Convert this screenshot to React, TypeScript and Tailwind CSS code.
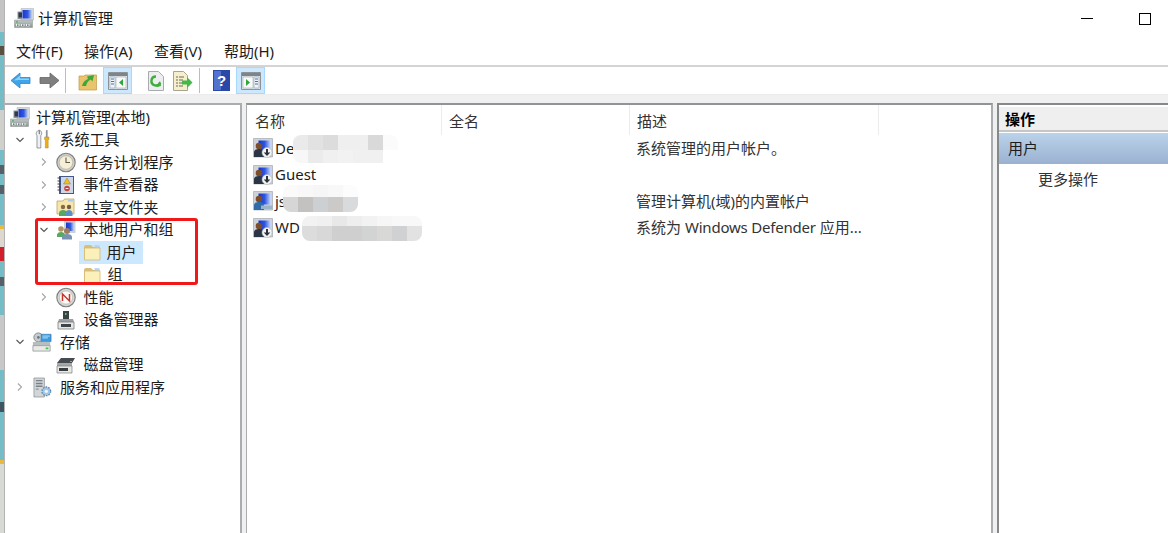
import React from "react";

const FONT = '"Noto Sans", "Noto Sans CJK SC", sans-serif';

function ComputerMgmt() {
  return (
    <svg viewBox="0 0 20 20" className="w-5 h-5 shrink-0">
      <defs>
        <linearGradient id="scr" x1="0" x2="1" y1="0" y2="0">
          <stop offset="0" stopColor="#1c38cc" />
          <stop offset="0.55" stopColor="#2f58e0" />
          <stop offset="1" stopColor="#c4d4f6" />
        </linearGradient>
        <linearGradient id="base" x1="0" x2="0" y1="0" y2="1">
          <stop offset="0" stopColor="#c2c8c8" />
          <stop offset="1" stopColor="#8a9492" />
        </linearGradient>
      </defs>
      <path d="M7 0.500h12.500v11.500H7z" fill="#d4d8de" stroke="#a8aeb6" strokeWidth="0.500" />
      <path d="M8.500 2h9.500v8.500H8.500z" fill="url(#scr)" />
      <path d="M3.500 3.500H8V11H3.500z" fill="#8e9498" />
      <path d="M4.500 4.500H8v5H4.500z" fill="#2c3a4a" />
      <path d="M0.500 12h18v7.500H0.500z" fill="url(#base)" stroke="#8a9090" strokeWidth="0.500" />
      <path d="M2 13.200h2v1.300H2z" fill="#38c24a" />
      <path d="M2 16h3.500v2.200H2zM7 16h3.500v2.200H7zM12 16h3.500v2.200H12z" fill="#eef1ee" />
      <path d="M3 16.500h1.500v1.200H3zM8 16.500h1.500v1.200H8zM13 16.500h1.500v1.200H13z" fill="#4e5a58" />
    </svg>
  );
}

function UserItem({ plain }: { plain?: boolean }) {
  return (
    <svg viewBox="0 0 20 20" className="w-5 h-5 shrink-0">
      <defs>
        <linearGradient id="uscr" x1="0" x2="1" y1="0" y2="0">
          <stop offset="0" stopColor="#1433cc" />
          <stop offset="0.5" stopColor="#2d57e2" />
          <stop offset="1" stopColor="#d2def8" />
        </linearGradient>
      </defs>
      <path d="M0.500 0.500h19v18.500h-19z" fill="#cfd3d8" stroke="#9aa0a6" strokeWidth="0.600" />
      <path d="M5.500 2.500H18v11H5.500z" fill="url(#uscr)" />
      <circle cx="6" cy="8" r="3.300" fill="#7c4e2c" />
      <path d="M1 19v-4.500c0-2.500 2-3.500 5-3.500s5 1 5 3.500V19z" fill={plain ? "#2f6ca8" : "#2a3646"} />
      {plain ? (
        <path d="M8 14.500h11.500V18H8z" fill="#9cb4c8" />
      ) : (
        <g>
          <circle cx="14" cy="14.500" r="5" fill="#f2f3f4" stroke="#a8aeb2" strokeWidth="0.500" />
          <path d="M13 11h2v3.500h2.300L14 18l-3.300-3.500H13z" fill="#2c3238" />
        </g>
      )}
    </svg>
  );
}

function Folder() {
  return (
    <svg viewBox="0 0 20 20" className="w-[20px] h-[20px] shrink-0">
      <path d="M2 5c0-1 .6-2 2-2h5l2 2h7V18H2z" fill="#d8bf7e" />
      <path d="M2.500 6h15.500v12H2.500z" fill="#fbefba" stroke="#d4b86e" strokeWidth="0.800" />
      <path d="M12.500 3.200h5v2.300h-5z" fill="#b4d2ec" />
    </svg>
  );
}

function Tools() {
  return (
    <svg viewBox="0 0 20 24" className="w-[17px] h-[21px]">
      <path d="M6 1c-3 1-4.500 4-2.500 6.500V22H8V7.500C10 5 9 2 6.500 1v4.500H6z" fill="#eef0f2" stroke="#6c7276" strokeWidth="0.800" />
      <path d="M14 1h2v8h-2z" fill="#8c9195" />
      <path d="M12.500 9h5v3l-.8 1v9h-3.400v-9l-.8-1z" fill="#eeb016" stroke="#a5760c" strokeWidth="0.500" />
    </svg>
  );
}

function Clock() {
  return (
    <svg viewBox="0 0 20 20" className="w-[21px] h-[21px]">
      <circle cx="10" cy="10" r="9.200" fill="#cfcfc8" stroke="#7c8084" strokeWidth="1.100" />
      <circle cx="10" cy="10" r="6.800" fill="#f6efd8" stroke="#a9a595" strokeWidth="0.600" />
      <path d="M10 5v5h4" fill="none" stroke="#5e5a50" strokeWidth="1.100" />
    </svg>
  );
}

function EventViewer() {
  return (
    <svg viewBox="0 0 20 20" className="w-5 h-5">
      <path d="M3 1h15v18H3z" fill="#44598a" />
      <path d="M5 2h12v16H5z" fill="#cdd7e8" />
      <path d="M1.500 3h3M1.500 6h3M1.500 9h3M1.500 12h3M1.500 15h3" stroke="#3a3f48" strokeWidth="1" />
      <path d="M11 3l3.500 6h-7z" fill="#f0c020" stroke="#9c7a10" strokeWidth="0.500" />
      <circle cx="11" cy="13.500" r="2.800" fill="#c8423a" />
      <path d="M9.600 13.500h2.800" stroke="#fff" strokeWidth="0.900" />
    </svg>
  );
}

function Shared() {
  return (
    <svg viewBox="0 0 20 20" className="w-5 h-5">
      <path d="M1 4h6l1.500-2H18v15H1z" fill="#f6e6ac" stroke="#c0a55e" strokeWidth="0.800" />
      <path d="M12 2.500h5v2h-5z" fill="#a8cce8" />
      <circle cx="7" cy="10" r="2.200" fill="#8a6a44" />
      <circle cx="13" cy="10" r="2.200" fill="#7a5c3c" />
      <path d="M3 19v-3c0-2 2-3 4-3s4 1 4 3v3z" fill="#55a864" />
      <path d="M9.500 19v-3c0-2 2-3 3.500-3s3.500 1 3.500 3v3z" fill="#5b8fc8" />
    </svg>
  );
}

function LocalUsers() {
  return (
    <svg viewBox="0 0 20 20" className="w-5 h-5">
      <path d="M8 1h11.500v12H8z" fill="#ccd2da" />
      <path d="M10 2.500h8v8.500h-8z" fill="url(#scr)" />
      <circle cx="5" cy="9" r="2.800" fill="#b09468" />
      <path d="M1 17v-2c0-2 2-3 4-3s4 1 4 3v2z" fill="#5aa85e" />
      <circle cx="11" cy="11" r="3" fill="#a07c58" />
      <path d="M6 19.500V17c0-2 2-3 5-3s5 1 5 3v2.500z" fill="#7793b0" />
    </svg>
  );
}

function Perf() {
  return (
    <svg viewBox="0 0 20 20" className="w-[21px] h-[21px]">
      <circle cx="10" cy="10" r="9.200" fill="#d8d6d0" stroke="#7a7e80" strokeWidth="1.100" />
      <circle cx="10" cy="10" r="6.600" fill="#fbfaf6" stroke="#a5a5a0" strokeWidth="0.500" />
      <path d="M6.500 13.500V6.500L13.500 13.500V6.500" fill="none" stroke="#c8342c" strokeWidth="1.500" />
    </svg>
  );
}

function DeviceMgr() {
  return (
    <svg viewBox="0 0 20 20" className="w-5 h-5">
      <path d="M7 1h6v9H7z" fill="#3a4244" />
      <path d="M9 3h1.500v2H9z" fill="#4fd05a" />
      <path d="M3 9h14l1 3H2z" fill="#9a9ea2" />
      <path d="M2 12h16v7H2z" fill="#e6e7e3" stroke="#7a7f84" strokeWidth="0.800" />
      <path d="M5 14h10v3H5z" fill="#3e4448" />
    </svg>
  );
}

function Storage() {
  return (
    <svg viewBox="0 0 22 22" className="w-[22px] h-[22px]">
      <circle cx="7" cy="6" r="5" fill="#c6ccce" stroke="#6a7276" strokeWidth="0.800" />
      <circle cx="7" cy="6" r="1.500" fill="#6e777b" />
      <path d="M10 2.500h11v8H10z" fill="#3d9adf" stroke="#2570aa" strokeWidth="0.600" />
      <path d="M11.500 4.500h8M11.500 6.500h6" stroke="#bfe6fa" strokeWidth="1" />
      <path d="M1 11h19v4H1z" fill="#b8bec0" />
      <path d="M1 15h19v6H1z" fill="#e8eae6" stroke="#7a8084" strokeWidth="0.700" />
      <path d="M15 17h3v2h-3z" fill="#4cc255" />
    </svg>
  );
}

function Disk() {
  return (
    <svg viewBox="0 0 20 20" className="w-5 h-5">
      <path d="M5 3h14l-3 5H1z" fill="#454b4f" />
      <path d="M1 8h15v3H1z" fill="#a4a9ac" />
      <path d="M14 6h2v1h-2z" fill="#4fd05a" />
      <path d="M1 11h15v7H1z" fill="#e8e8e2" stroke="#7c8084" strokeWidth="0.700" />
      <path d="M3 13h9v3H3z" fill="#3a3f42" />
    </svg>
  );
}

function Services() {
  return (
    <svg viewBox="0 0 20 22" className="w-[19px] h-[21px]">
      <path d="M1 1h11v20H1z" fill="#d2d6d8" stroke="#80868a" strokeWidth="0.700" />
      <path d="M3 3h7v1.500H3zM3 6h7v1.500H3zM3 9h7v1.500H3z" fill="#7a8286" />
      <path d="M3 12h3v1.500H3z" fill="#8ba0b0" />
      <circle cx="14" cy="15" r="4.600" fill="#a4c6e6" stroke="#5a88b0" strokeWidth="1.400" strokeDasharray="1.700 1.200" />
      <circle cx="14" cy="15" r="1.700" fill="#f2f6fa" />
    </svg>
  );
}

function Chevron({ open }: { open?: boolean }) {
  return open ? (
    <svg viewBox="0 0 10 10" className="w-[10px] h-[10px]">
      <path d="M1.500 3l3.500 3.500L8.500 3" fill="none" stroke="#555" strokeWidth="1.100" />
    </svg>
  ) : (
    <svg viewBox="0 0 10 10" className="w-[10px] h-[10px]">
      <path d="M3 1.500L6.500 5 3 8.500" fill="none" stroke="#a6a6a6" strokeWidth="1.100" />
    </svg>
  );
}

function Row({
  pad,
  chevron,
  icon,
  label,
  gap = "gap-[7.500px]",
}: {
  pad: string;
  chevron?: "open" | "closed";
  icon: React.ReactNode;
  label: string;
  gap?: string;
}) {
  return (
    <div className={`h-[22.500px] flex items-center ${pad}`}>
      <div className="w-[13px] mr-[6px] flex justify-center shrink-0">
        {chevron && <Chevron open={chevron === "open"} />}
      </div>
      <div className={`flex items-center ${gap}`}>
        <div className="w-[20px] flex justify-center shrink-0">{icon}</div>
        <span className="whitespace-nowrap">{label}</span>
      </div>
    </div>
  );
}

function Mosaic({ rows, cell = 15 }: { rows: { h: number; colors: string[] }[]; cell?: number }) {
  return (
    <div className="rounded-lg overflow-hidden">
      {rows.map((r, i) => (
        <div key={i} className="flex">
          {r.colors.map((c, j) => (
            <div key={j} style={{ width: cell, height: r.h, background: c }} />
          ))}
        </div>
      ))}
    </div>
  );
}

function ListRow({
  icon,
  name,
  desc,
  mosaicClass,
  mosaic,
}: {
  icon: React.ReactNode;
  name: string;
  desc?: React.ReactNode;
  mosaicClass?: string;
  mosaic?: { h: number; colors: string[] }[];
}) {
  return (
    <div className="h-[26.500px] flex items-center">
      <div className="w-[194px] flex items-center pl-[6px] gap-[2px] relative">
        {icon}
        <span>{name}</span>
        {mosaic && (
          <div className={`absolute ${mosaicClass}`}>
            <Mosaic rows={mosaic} />
          </div>
        )}
      </div>
      <div className="w-[188px]" />
      <div className="pl-[7px] text-[#333] whitespace-nowrap">{desc}</div>
    </div>
  );
}

function ToolBtn({ children, className = "" }: { children: React.ReactNode; className?: string }) {
  return <div className={`flex items-center justify-center ${className}`}>{children}</div>;
}

export default function App() {
  return (
    <div
      className="w-[1168px] h-[533px] overflow-hidden flex bg-white text-[15px] leading-none text-[#1c1c1c]"
      style={{ fontFamily: FONT }}
    >
      {/* desktop sliver */}
      <div className="w-[3.500px] shrink-0 flex flex-col bg-[#74bcc6]">
        <div className="h-[32px] bg-[#c4c4c4]" />
        <div className="h-[14px] bg-[#74bcc6]" />
        <div className="h-[9px] bg-[#5a5040]" />
        <div className="h-[55px] bg-[#74bcc6]" />
        <div className="h-[40px] bg-[#cfcfcb]" />
        <div className="h-[15px] bg-[#74bcc6]" />
        <div className="h-[9px] bg-[#55606a]" />
        <div className="h-[11px] bg-[#74bcc6]" />
        <div className="h-[9px] bg-[#55606a]" />
        <div className="h-[31px] bg-[#74bcc6]" />
        <div className="h-[4px] bg-[#e8b93c]" />
        <div className="h-[18px] bg-[#dcd8d0]" />
        <div className="h-[14px] bg-[#d21f2c]" />
        <div className="h-[16px] bg-[#74bcc6]" />
        <div className="h-[9px] bg-[#55606a]" />
        <div className="h-[29px] bg-[#74bcc6]" />
        <div className="h-[55px] bg-[#c8c8c8]" />
        <div className="h-[32px] bg-[#74bcc6]" />
        <div className="h-[10px] bg-[#3f5460]" />
        <div className="h-[48px] bg-[#74bcc6]" />
        <div className="h-[4px] bg-[#e8b93c]" />
        <div className="flex-1 bg-[#d8dad6]" />
      </div>
      <div className="w-[1.500px] shrink-0 bg-[#b4b4b4]" />

      {/* window */}
      <div className="flex-1 min-w-0 flex flex-col">
        {/* title bar */}
        <div className="h-[37px] flex items-start shrink-0">
          <div className="pl-[9px] pt-[8px]">
            <ComputerMgmt />
          </div>
          <div className="ml-[4px] pt-[11px] text-[15px]">计算机管理</div>
          <div className="flex-1" />
          <div className="w-[12px] h-[1px] bg-black mt-[18px]" />
          <div className="w-[12px] h-[12px] border border-black ml-[46px] mr-[17px] mt-[13px]" />
        </div>

        {/* menu */}
        <div className="h-[30px] flex pl-[11px] pt-[7px] shrink-0 gap-[21px] text-[15px] border-b-2 border-[#d4d4d4]">
          <span className="w-[47px] whitespace-nowrap">文件(F)</span>
          <span className="w-[49px] whitespace-nowrap">操作(A)</span>
          <span className="w-[49px] whitespace-nowrap">查看(V)</span>
          <span className="w-[51px] whitespace-nowrap">帮助(H)</span>
        </div>

        {/* toolbar */}
        <div className="h-[28px] shrink-0 flex items-center pl-[5px] border-b border-[#ececec]">
          <ToolBtn className="w-[21px] h-[21px]">
            <svg viewBox="0 0 21 21" className="w-[21px] h-[21px]">
              <path d="M1 10.500L10 3v4.500h10v6H10V18z" fill="#3fa4ea" stroke="#2d86c8" strokeWidth="0.800" />
              <path d="M4 10.500l6-5v3h9v1.500H9z" fill="#8fd0f5" />
            </svg>
          </ToolBtn>
          <ToolBtn className="w-[21px] h-[21px] ml-[8px]">
            <svg viewBox="0 0 21 21" className="w-[21px] h-[21px]">
              <path d="M20 10.500L11 3v4.500H1v6h10V18z" fill="#7f7f7f" stroke="#666" strokeWidth="0.800" />
            </svg>
          </ToolBtn>
          <div className="w-px h-[25px] bg-[#bcbcbc] ml-[5px]" />
          <ToolBtn className="w-[20px] h-[20px] ml-[12px]">
            <svg viewBox="0 0 20 20" className="w-[20px] h-[20px]">
              <path d="M1 5h5l1-1h11.500v15H1z" fill="#e9c46c" stroke="#c29a42" strokeWidth="0.700" />
              <path d="M4 15c1-4 3-6 6-7l-1-2.500L16 4l-1.500 6.500-1.800-2c-2 1-4 3-4.700 6.500z" fill="#3fa63a" />
            </svg>
          </ToolBtn>
          <ToolBtn className="w-[29px] h-[27px] ml-[5px] bg-[#cce8ff] border border-[#a8d8ff]">
            <svg viewBox="0 0 20 18" className="w-[20px] h-[18px]">
              <path d="M.5.500h19v17H.5z" fill="#dfe3e6" stroke="#8c9296" />
              <path d="M1 1h18v3H1z" fill="#7e858a" />
              <path d="M2 5h5v11H2z" fill="#f0f4f8" stroke="#8ea4bc" strokeWidth="0.600" />
              <path d="M8 5h10v11H8z" fill="#f8fafa" stroke="#a6aeb4" strokeWidth="0.600" />
              <path d="M15 7v7l-4-3.500z" fill="#2fa83a" />
              <path d="M3 7h3M3 9.500h3M3 12h3" stroke="#4a74a8" />
            </svg>
          </ToolBtn>
          <ToolBtn className="w-[18px] h-[21px] ml-[15px]">
            <svg viewBox="0 0 16 20" className="w-[16px] h-[20px]">
              <path d="M.5.500h10l5 5v14H.5z" fill="#eceef0" stroke="#a8abae" />
              <path d="M8 5.500a4.500 4.500 0 1 0 4.200 6" fill="none" stroke="#3fae3a" strokeWidth="2.400" />
              <path d="M8 16l5-1-1-5z" fill="#3fae3a" />
            </svg>
          </ToolBtn>
          <ToolBtn className="w-[20px] h-[21px] ml-[8px]">
            <svg viewBox="0 0 20 20" className="w-[20px] h-[20px]">
              <path d="M.5.500h10l4 4v15H.5z" fill="#f7eecb" stroke="#a8a48e" />
              <path d="M3 6h2M6 6h5M3 9h2M6 9h4M3 12h2M6 12h4M3 15h2M6 15h4" stroke="#6a6a60" />
              <path d="M9 9.500h5V6l5.500 5.500L14 17v-3.500H9z" fill="#46b84a" />
            </svg>
          </ToolBtn>
          <div className="w-px h-[25px] bg-[#bcbcbc] ml-[6px]" />
          <ToolBtn className="w-[17px] h-[21px] ml-[13px]">
            <svg viewBox="0 0 17 21" className="w-[17px] h-[21px]">
              <path d="M0 0h17v21H0z" fill="#2a48a8" />
              <path d="M1 1h7v19H1z" fill="#5172cf" />
              <text x="8.500" y="16" textAnchor="middle" fontSize="15" fontWeight="700" fill="#ffffff" fontFamily="Liberation Sans">?</text>
            </svg>
          </ToolBtn>
          <ToolBtn className="w-[29px] h-[27px] ml-[6px] bg-[#cce8ff] border border-[#a8d8ff]">
            <svg viewBox="0 0 20 18" className="w-[20px] h-[18px]">
              <path d="M.5.500h19v17H.5z" fill="#dfe3e6" stroke="#8c9296" />
              <path d="M1 1h18v3H1z" fill="#7e858a" />
              <path d="M2 5h10v11H2z" fill="#f8fafa" stroke="#a6aeb4" strokeWidth="0.600" />
              <path d="M13 5h5v11h-5z" fill="#f0f4f8" stroke="#8ea4bc" strokeWidth="0.600" />
              <path d="M5 7v7l4-3.500z" fill="#2fa83a" />
              <path d="M14 7h3M14 9.500h3M14 12h3" stroke="#4a74a8" />
            </svg>
          </ToolBtn>
        </div>

        {/* spacer strip */}
        <div className="h-[8px] shrink-0 bg-[#f0f0f0]" />

        {/* panes */}
        <div className="flex-1 min-h-0 flex bg-[#f0f0f0]">
          {/* tree */}
          <div className="w-[237px] shrink-0 bg-white border-t-2 border-r-2 border-[#a9adb0] pt-[1px]">
            <div className="h-[22.500px] flex items-center pl-[5px] gap-[6px]">
              <ComputerMgmt />
              <span>计算机管理(本地)</span>
            </div>
            <Row pad="pl-[8px]" chevron="open" icon={<Tools />} label="系统工具" />
            <Row pad="pl-[32px]" chevron="closed" icon={<Clock />} label="任务计划程序" />
            <Row pad="pl-[32px]" chevron="closed" icon={<EventViewer />} label="事件查看器" />
            <Row pad="pl-[32px]" chevron="closed" icon={<Shared />} label="共享文件夹" />
            <div className="relative">
              <Row pad="pl-[32px]" chevron="open" icon={<LocalUsers />} label="本地用户和组" />
              <div className="h-[22.500px] flex items-center pl-[73.500px]">
                <div className="h-full flex items-center bg-[#cce8ff] pl-[3px] pr-[6px] gap-[5px]">
                  <Folder />
                  <span>用户</span>
                </div>
              </div>
              <div className="h-[22.500px] flex items-center pl-[76.500px] gap-[6px]">
                <Folder />
                <span>组</span>
              </div>
              <div className="absolute left-[29.500px] top-[-1px] w-[163px] h-[67px] border-[3px] border-[#f01818] rounded-[3px]" />
            </div>
            <Row pad="pl-[32px]" chevron="closed" icon={<Perf />} label="性能" />
            <Row pad="pl-[32px]" icon={<DeviceMgr />} label="设备管理器" />
            <Row pad="pl-[8px]" chevron="open" icon={<Storage />} label="存储" gap="gap-[8px]" />
            <Row pad="pl-[32px]" icon={<Disk />} label="磁盘管理" />
            <Row pad="pl-[8px]" chevron="closed" icon={<Services />} label="服务和应用程序" gap="gap-[8px]" />
          </div>

          <div className="w-[4px] shrink-0" />

          {/* list */}
          <div className="w-[747px] shrink-0 bg-white border-t-2 border-l border-r-2 border-[#a9adb0] border-t-[#8f9497]">
            <div className="h-[30px] flex text-[#333]">
              <div className="w-[195px] pl-[8px] pt-[9px] border-r border-[#ececec]">名称</div>
              <div className="w-[188px] pl-[7px] pt-[9px] border-r border-[#ececec]">全名</div>
              <div className="w-[249px] pl-[7px] pt-[9px] border-r border-[#ececec]">描述</div>
            </div>
            <ListRow
              icon={<UserItem />}
              name="De"
              desc="系统管理的用户帐户。"
              mosaicClass="left-[46px] top-[-3px]"
              mosaic={[
                { h: 15, colors: ["#eaeaea", "#e2e2e2", "#dcdcdc", "#efefef", "#efefef", "#d9d9d9", "#fbfbfb"] },
                { h: 13, colors: ["#f7f7f7", "#ebebeb", "#f0f0f0", "#f2f2f2", "#f0f0f0", "#f0f0f0"] },
              ]}
            />
            <ListRow icon={<UserItem />} name="Guest" />
            <ListRow
              icon={<UserItem plain />}
              name="js"
              desc="管理计算机(域)的内置帐户"
              mosaicClass="left-[36px] top-[-6px]"
              mosaic={[
                { h: 12, colors: ["#fafafa", "#f8f8f8", "#f6f6f6", "#f8f8f8", "#fcfcfc"] },
                { h: 15, colors: ["#d6d6d6", "#c4c2c0", "#cdd0d3", "#cbcac8", "#d8dadc"] },
              ]}
            />
            <ListRow
              icon={<UserItem />}
              name="WD"
              desc={
                <>
                  系统为 <span className="tracking-[-0.2px]">Windows Defender</span> 应用...
                </>
              }
              mosaicClass="left-[55px] top-[-2px]"
              mosaic={[
                { h: 10, colors: ["#f2f2f2", "#f0f0f0", "#e8e8e8", "#eeeeee", "#f2f2f2", "#f6f6f6", "#f8f8f8", "#f8f8f8"] },
                { h: 15, colors: ["#dcdcdc", "#d8d8d8", "#cfcfcf", "#cfcfcf", "#d2d4d4", "#d8d8d6", "#cfd1d3", "#e2e2e2"] },
              ]}
            />
          </div>

          <div className="w-[4px] shrink-0" />

          {/* actions */}
          <div className="flex-1 min-w-0 bg-white border-l-2 border-t-2 border-[#85898c]">
            <div className="mt-[2px] h-[25px] bg-[#efefef] border-b-2 border-[#c6c6c6] pl-[6px] pt-[5px] font-bold text-[15px] text-black">
              操作
            </div>
            <div className="mt-[1px] h-[31px] bg-gradient-to-b from-[#bad2ea] to-[#9ab2d0] pl-[9px] flex items-center">
              用户
            </div>
            <div className="h-[31px] pl-[39px] pt-[8px] text-[#333]">更多操作</div>
          </div>
        </div>
      </div>
    </div>
  );
}
